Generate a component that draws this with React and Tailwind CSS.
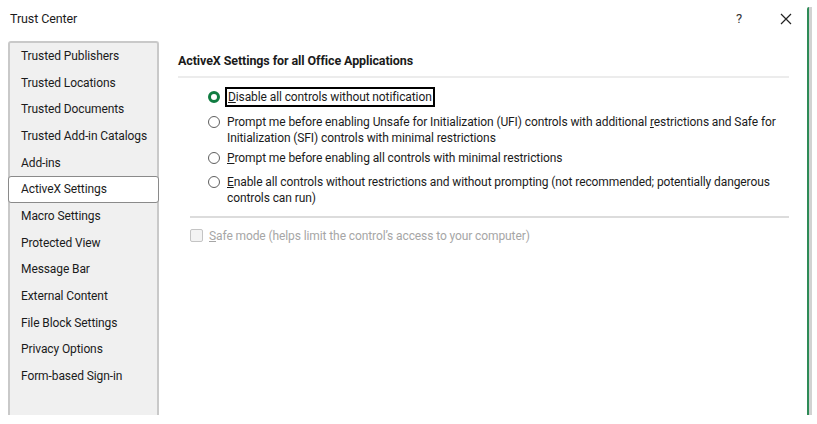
import React from 'react';

const navItems = [
  'Trusted Publishers',
  'Trusted Locations',
  'Trusted Documents',
  'Trusted Add-in Catalogs',
  'Add-ins',
  'ActiveX Settings',
  'Macro Settings',
  'Protected View',
  'Message Bar',
  'External Content',
  'File Block Settings',
  'Privacy Options',
  'Form-based Sign-in'
];

const Radio = ({ checked }) =>
  checked ? (
    <span className="mt-[2px] h-[12px] w-[12px] flex-shrink-0 rounded-full border-[3px] border-[#107c41] bg-white" />
  ) : (
    <span className="mt-[2px] h-[12px] w-[12px] flex-shrink-0 rounded-full border border-[#5f5f5f] bg-white" />
  );

const App = () => {
  return (
    <div
      className="flex h-[424px] w-[817px] overflow-hidden bg-white text-[12px] tracking-[-0.1px] text-[#1b1b1b]"
      style={{ fontFamily: 'Roboto, "Noto Sans", sans-serif' }}
    >
      <div className="flex w-[807px] flex-col">
        <div className="flex h-[38px] items-center pl-[10px]">
          <span className="flex-1 text-[12.5px]">Trust Center</span>
          <span className="mr-[38px] text-[13px] text-[#333]">?</span>
          <svg width="12" height="12" viewBox="0 0 12 12" className="mr-[15px]">
            <path d="M1 1 L11 11 M11 1 L1 11" stroke="#222" strokeWidth="1.2" />
          </svg>
        </div>

        <div className="flex flex-1">
          <div className="ml-[8px] mt-[3px] mb-[9px] flex w-[151px] flex-col rounded-t-[3px] border-2 border-b-0 border-[#c9c9c9] bg-[#f0f0f0]">
            {navItems.map((item) =>
              item === 'ActiveX Settings' ? (
                <div
                  key={item}
                  className="-mx-[2px] flex h-[27px] items-center whitespace-nowrap rounded-[3px] border border-[#8a8a8a] bg-white pl-[12px]"
                >
                  {item}
                </div>
              ) : (
                <div key={item} className="flex h-[26.6px] items-center whitespace-nowrap pl-[11px]">
                  {item}
                </div>
              )
            )}
          </div>

          <div className="flex-1 pl-[19px] pr-[18px] pt-[14px]">
            <div className="border-b-2 border-[#ececec] pb-[5px] text-[12.5px] font-bold">
              ActiveX Settings for all Office Applications
            </div>

            <div className="ml-[12px] border-b-2 border-[#dcdcdc] pb-[10px] pl-[18px] pt-[11px] leading-[16px]">
              <div className="flex items-start gap-[7px]">
                <Radio checked />
                <span className="-ml-[2px] -my-[2px] border-2 border-black px-[1px]">
                  <u>D</u>isable all controls without notification
                </span>
              </div>
              <div className="mt-[9px] flex items-start gap-[7px]">
                <Radio />
                <span>
                  Prompt me before enabling Unsafe for Initialization (UFI) controls with additional{' '}
                  <u>r</u>estrictions and Safe for Initialization (SFI) controls with minimal restrictions
                </span>
              </div>
              <div className="mt-[4px] flex items-start gap-[7px]">
                <Radio />
                <span>
                  <u>P</u>rompt me before enabling all controls with minimal restrictions
                </span>
              </div>
              <div className="mt-[8px] flex items-start gap-[7px]">
                <Radio />
                <span>
                  <u>E</u>nable all controls without restrictions and without prompting (not recommended;
                  potentially dangerous controls can run)
                </span>
              </div>
            </div>

            <div className="ml-[12px] mt-[9px] flex items-center gap-[6px] text-[#a6a6a6]">
              <span className="h-[13px] w-[13px] rounded-[2px] border border-[#c4c4c4] bg-[#f3f3f3]" />
              <span>
                <u>S</u>afe mode (helps limit the control’s access to your computer)
              </span>
            </div>
          </div>
        </div>
      </div>

      <div className="mb-[9px] mt-[7px] flex w-[10px]">
        <div className="w-[2px] rounded-tl-[3px] bg-[#2e8b57]" />
        <div className="w-[3px] bg-[#d2d2d2]" />
      </div>
    </div>
  );
};

export default App;
